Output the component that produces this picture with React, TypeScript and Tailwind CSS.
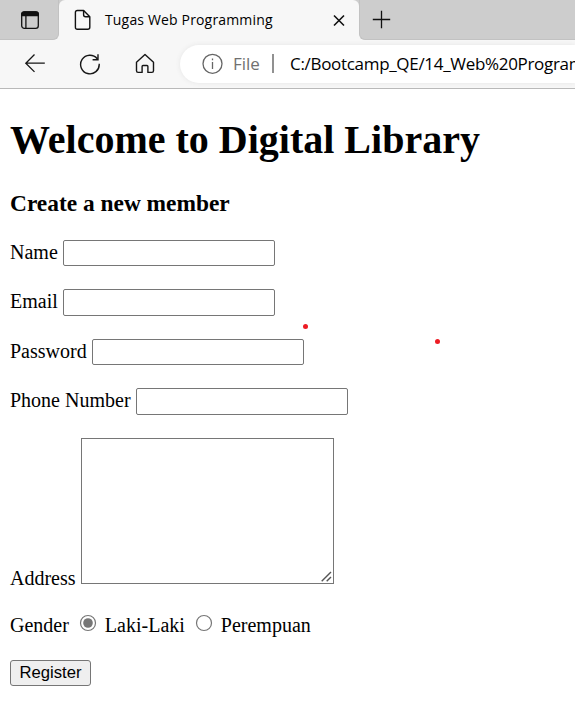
import type { ReactNode } from 'react';

function TabBar() {
  return (
    <div className="flex h-10 bg-[linear-gradient(#cdcdcd_50%,#f7f7f7_50%)]">
      <div className="h-10 w-[59px] rounded-br-[6px] border-r border-b border-[#c2c2c2] bg-[#cdcdcd]">
        <svg className="ml-5 mt-[10px]" width="20" height="20" viewBox="0 0 20 20" fill="none" stroke="#111" strokeWidth="1.3">
          <rect x="1.7" y="1.9" width="16.6" height="16.4" rx="2.6" />
          <path d="M1.7 5.7V4.5Q1.7 1.9 4.3 1.9h11.4q2.6 0 2.6 2.6v1.2z" fill="#111" />
          <path d="M5.9 5.5v12.8" />
        </svg>
      </div>
      <div className="flex h-10 w-[300px] shrink-0 rounded-t-[6px] bg-[#f7f7f7] pl-[15px]">
        <svg className="mt-[9px] shrink-0" width="18" height="22" viewBox="0 0 18 22" fill="none" stroke="#111" strokeWidth="1.4" strokeLinejoin="round">
          <path d="M3.4 1.5h6.2l6.2 6.3v10.5q0 2-2 2H3.4q-2 0-2-2V3.5q0-2 2-2z" />
          <path d="M9.6 1.5v4.3q0 2 2 2h4.2" />
        </svg>
        <span className="ml-[13px] mt-[10px] w-[168px] shrink-0 whitespace-nowrap text-[14px] leading-5 tracking-[0.16px]">
          Tugas Web Programming
        </span>
        <svg className="ml-[60px] mt-[14px] shrink-0" width="12" height="13" viewBox="0 0 12 13" stroke="#111" strokeWidth="1.6">
          <path d="M1 1.5l10 10M11 1.5l-10 10" />
        </svg>
      </div>
      <div className="h-10 flex-1 rounded-bl-[6px] border-b border-l border-[#c2c2c2] bg-[#cdcdcd]">
        <svg className="ml-3 mt-[10px]" width="19" height="19" viewBox="0 0 19 19" stroke="#111" strokeWidth="1.3">
          <path d="M.8 9.5h17.4M9.5 .8v17.4" />
        </svg>
      </div>
    </div>
  );
}

function Toolbar() {
  return (
    <div className="flex h-[49px] border-b border-[#b9b9b9] bg-[#f7f7f7] pt-[5px]">
      <svg className="ml-6 mt-2 shrink-0" width="22" height="20" viewBox="0 0 22 20" fill="none" stroke="#161616" strokeWidth="1.3">
        <path d="M10.5 1.5L1.8 10.2l8.7 8.7M1.8 10.2h19" />
      </svg>
      <svg className="ml-[33px] mt-2 shrink-0" width="22" height="22" viewBox="0 0 22 22" fill="none" stroke="#161616" strokeWidth="1.4">
        <path d="M20.2 10.8A9.3 9.3 0 1 1 18.2 5.7M19 1.3v5.4h-5.4" />
      </svg>
      <svg className="ml-[34px] mt-2 shrink-0" width="20" height="21" viewBox="0 0 20 21" fill="none" stroke="#161616" strokeWidth="1.4" strokeLinejoin="round">
        <path d="M1.5 9.2L10 1.5l8.5 7.7v8.6q0 1.6-1.6 1.6h-4v-6q0-.9-.9-.9H8q-.9 0-.9.9v6h-4q-1.6 0-1.6-1.6z" />
      </svg>
      <div className="ml-[25px] flex h-[38px] min-w-0 flex-1 overflow-hidden rounded-l-full bg-white shadow-[0_0_5px_#e5e5e5]">
        <svg className="ml-[22px] mt-2 shrink-0" width="22" height="22" viewBox="0 0 22 22" fill="none" stroke="#666" strokeWidth="1.3">
          <circle cx="10.5" cy="10.8" r="9.5" />
          <path d="M10.5 9v7M10.5 5.5v1.8" />
        </svg>
        <span className="ml-[9px] mt-[7px] w-[28px] shrink-0 text-[17px] leading-6 text-[#707070]">File</span>
        <span className="ml-[11px] mt-[9px] h-[19px] w-0.5 shrink-0 bg-[#919191]" />
        <span className="ml-4 mt-[7px] shrink-0 whitespace-nowrap text-[17px] leading-6 tracking-[-0.31px]">
          C:/Bootcamp_QE/14_Web%20Program
        </span>
      </div>
    </div>
  );
}

function Field({ label, className, type = 'text' }: { label: string; className: string; type?: string }) {
  return (
    <label className={`flex items-start ${className}`}>
      <span className="mt-px whitespace-pre leading-[23px]">{label} </span>
      <input type={type} className="h-full w-[212px] rounded-[2px] border border-[#767676] bg-white px-0.5 outline-none" />
    </label>
  );
}

function Radio({ children, checked = false, className }: { children: ReactNode; checked?: boolean; className: string }) {
  return (
    <label className={`flex ${className}`}>
      <input type="radio" name="gender" defaultChecked={checked} className="peer sr-only" />
      <svg className="mr-2 shrink-0" width="18" height="18" viewBox="0 0 18 18">
        <circle cx="9" cy="9" r="7.5" fill="white" stroke="#767676" strokeWidth="1.2" />
        {checked && <circle cx="9" cy="9" r="4.8" fill="#767676" />}
      </svg>
      <span className="leading-[23px]">{children}</span>
    </label>
  );
}

function RedDot({ className }: { className: string }) {
  return <span className={`absolute size-[5px] rounded-full bg-[#ed1c24] ${className}`} />;
}

export default function App() {
  return (
    <div className="relative h-[722px] w-[575px] overflow-hidden bg-white text-black">
      <header className="font-['Open_Sans','Noto_Sans',sans-serif]">
        <TabBar />
        <Toolbar />
      </header>
      <main className="pl-[10px] font-['Liberation_Serif',serif] text-[20px]">
        <h1 className="pt-7 text-[40px] font-bold leading-[46px]">Welcome to Digital Library</h1>
        <h3 className="mt-[27px] text-[23.4px] font-bold leading-[27px]">Create a new member</h3>
        <form onSubmit={(event) => event.preventDefault()}>
          <Field label="Name" className="mt-[23px] h-[26px]" />
          <Field label="Email" className="mt-[23px] h-[27px]" />
          <Field label="Password" type="password" className="mt-[23px] h-[26px]" />
          <Field label="Phone Number" className="mt-[23px] h-[27px]" />
          <label className="mt-[23px] flex h-[146px] items-end">
            <span className="mb-[-6px] whitespace-pre leading-[23px]">Address </span>
            <span className="relative">
              <textarea className="block h-[146px] w-[253px] resize-none border border-[#767676] bg-white p-0.5 outline-none" />
              <svg className="pointer-events-none absolute bottom-0.5 right-0.5" width="11" height="11" viewBox="0 0 11 11" stroke="#555" strokeWidth="1.4">
                <path d="M.7 10.3L10 1M5.7 10.3L10 6" />
              </svg>
            </span>
          </label>
          <div className="mt-[30px] flex">
            <span className="leading-[23px]">Gender</span>
            <Radio checked className="ml-[10px]">Laki-Laki</Radio>
            <Radio className="ml-[10px]">Perempuan</Radio>
          </div>
          <button className="mt-[23px] block h-[26px] w-[81px] rounded-[3px] border border-[#767676] bg-[#efefef] font-['Liberation_Sans',sans-serif] text-[16.67px] leading-[24px]">
            Register
          </button>
        </form>
      </main>
      <RedDot className="left-[302.5px] top-[323.5px]" />
      <RedDot className="left-[434.5px] top-[338.5px]" />
    </div>
  );
}
